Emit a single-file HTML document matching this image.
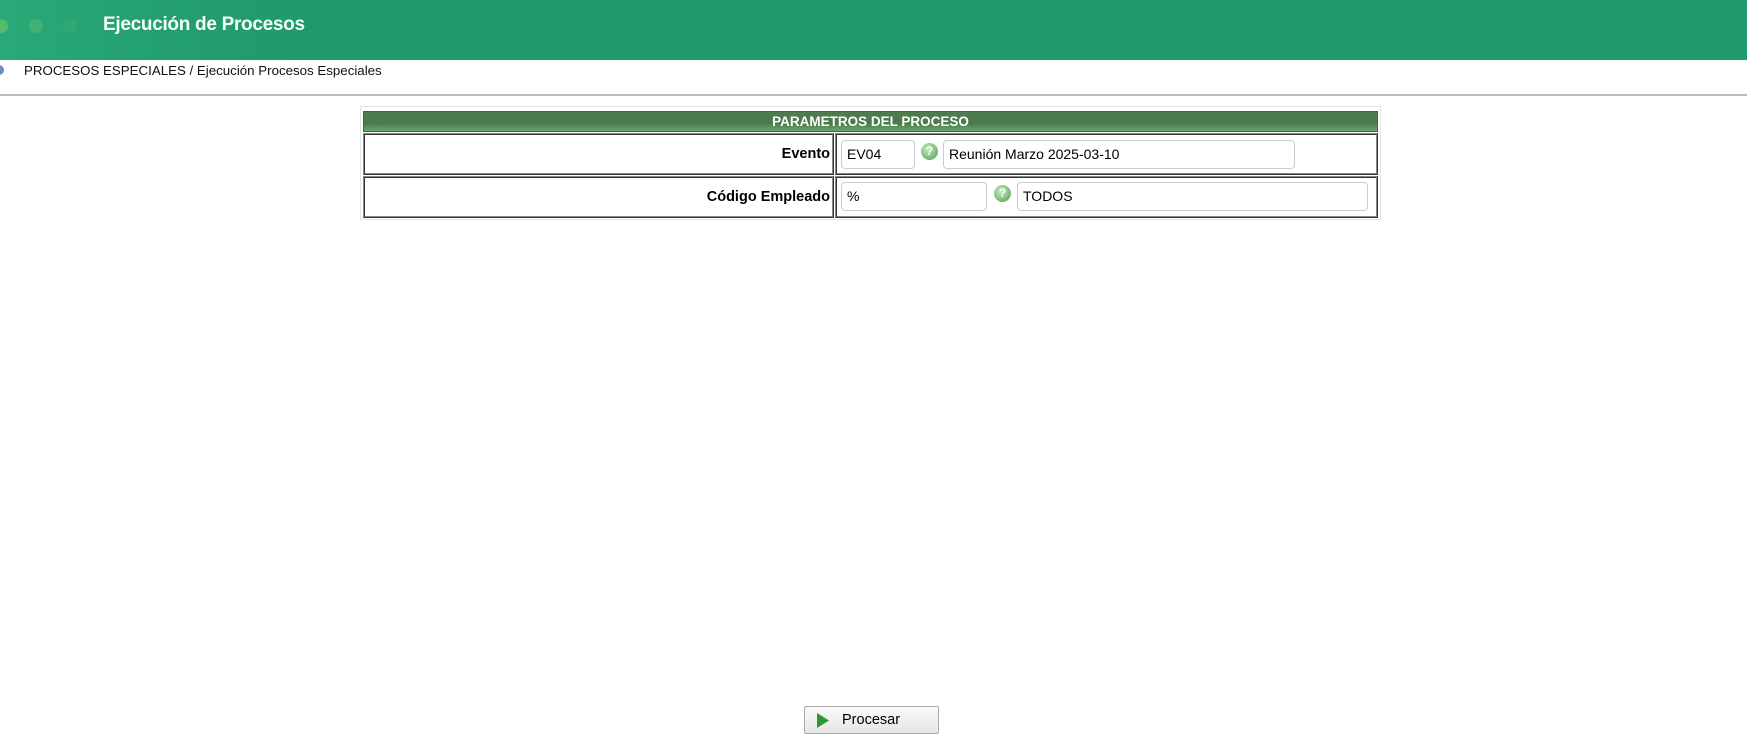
<!DOCTYPE html>
<html><head><meta charset="utf-8"><style>
body{margin:0;width:1759px;height:738px;background:#fff;font-family:"Liberation Sans","DejaVu Sans",sans-serif;position:relative;overflow:hidden}
.a{position:absolute}
.hdr{left:0;top:0;width:1747px;height:60px;background:linear-gradient(90deg,#2aa878 0,#1f9a6a 300px,#1f9a6a 100%)}
.dot{width:14px;height:14px;border-radius:50%;top:19px}
.inp{position:absolute;border:1px solid #ccc;border-radius:4px;background:#fff;font-size:14px;line-height:27px;padding-left:5px;box-sizing:border-box;height:29px;color:#000}
.help{position:absolute;width:17px;height:17px;border-radius:50%;background:radial-gradient(circle at 40% 35%,#c8ecc0,#4f9a50);color:#fff;font-size:12px;font-weight:bold;text-align:center;line-height:17px}
.cell{position:absolute;border:2px ridge #888;box-sizing:border-box}
</style></head><body>
<div class="a hdr"></div>
<div class="a dot" style="left:-6px;background:#5cc06a;opacity:.8"></div>
<div class="a dot" style="left:29px;background:#49b874;opacity:.7"></div>
<div class="a dot" style="left:63px;background:#3aae74;opacity:.5"></div>
<div class="a" style="left:103px;top:14px;color:#f4fff8;font-size:19px;font-weight:bold;letter-spacing:-0.3px">Ejecución de Procesos</div>
<div class="a" style="left:-6px;top:65px;width:10px;height:10px;border-radius:50%;background:#6a8cc0"></div>
<div class="a" style="left:24px;top:63px;font-size:13.3px;color:#111">PROCESOS ESPECIALES / Ejecución Procesos Especiales</div>
<div class="a" style="left:0;top:94px;width:1747px;height:2px;background:#bbb"></div>

<div class="a" style="left:360px;top:106px;width:1021px;height:114px;border:1px solid #e4e4e4;box-sizing:border-box"></div>
<div class="a" style="left:363px;top:111px;width:1015px;height:21px;background:linear-gradient(#4e7c50,#4a7a4c 60%,#6aa86c);border:1px solid #3a6a3c;box-sizing:border-box;color:#fff;font-weight:bold;font-size:13.5px;text-align:center;line-height:19px">PARAMETROS DEL PROCESO</div>
<div class="cell" style="left:363px;top:133px;width:471px;height:42px;text-align:right;font-weight:bold;font-size:14.5px;line-height:38px;padding-right:2px">Evento</div>
<div class="cell" style="left:835px;top:133px;width:543px;height:42px"></div>
<div class="cell" style="left:363px;top:176px;width:471px;height:42px;text-align:right;font-weight:bold;font-size:14.5px;line-height:38px;padding-right:2px">Código Empleado</div>
<div class="cell" style="left:835px;top:176px;width:543px;height:42px"></div>

<div class="inp" style="left:841px;top:140px;width:74px">EV04</div>
<div class="help" style="left:921px;top:143px">?</div>
<div class="inp" style="left:943px;top:140px;width:352px">Reunión Marzo 2025-03-10</div>
<div class="inp" style="left:841px;top:182px;width:146px">%</div>
<div class="help" style="left:994px;top:185px">?</div>
<div class="inp" style="left:1017px;top:182px;width:351px">TODOS</div>

<div class="a" style="left:804px;top:706px;width:135px;height:28px;border:1px solid #aaa;border-radius:2px;box-sizing:border-box;background:linear-gradient(#fafafa,#e6e6e6);font-size:14.5px;line-height:26px">
<svg class="a" style="left:12px;top:6px" width="12" height="15"><path d="M0 0L12 7.5L0 15Z" fill="#2a9a2a"/></svg>
<span class="a" style="left:37px;top:0">Procesar</span></div>
</body></html>
